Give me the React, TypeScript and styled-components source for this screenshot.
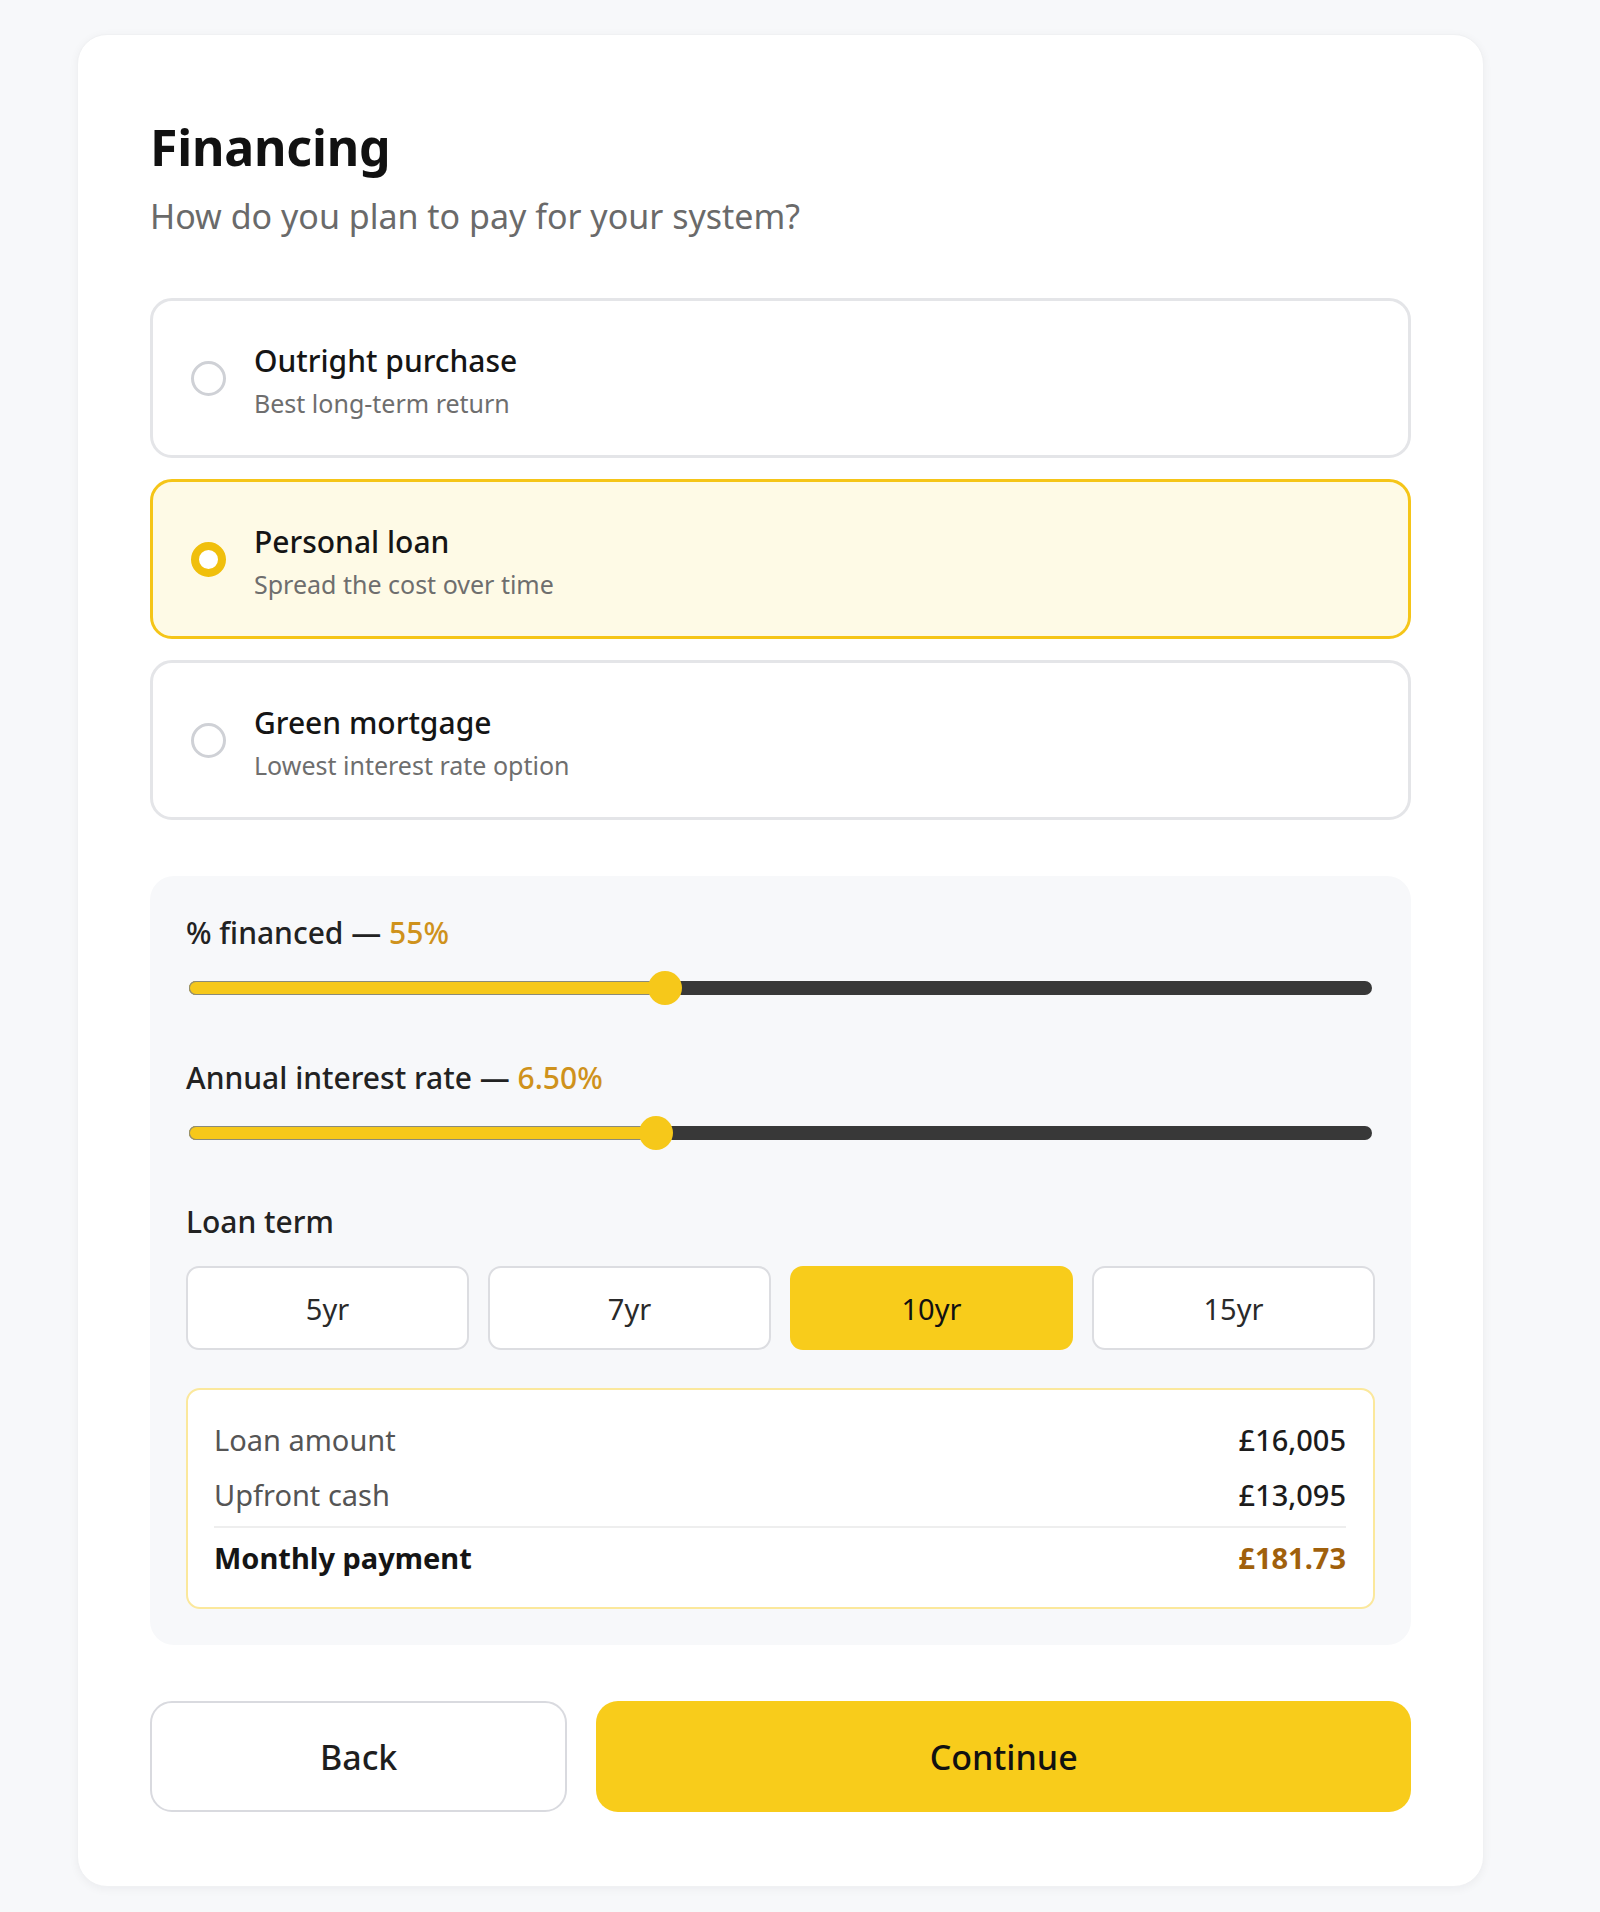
import styled, { createGlobalStyle } from 'styled-components'
import { useState } from 'react'

const GlobalStyle = createGlobalStyle`
	html, body {
		margin: 0;
		padding: 0;
		background: #f7f8fa;
		font-family: "Noto Sans", "Open Sans", "Liberation Sans", sans-serif;
		color: #1a1a1a;
	}
	* {
		box-sizing: border-box;
	}
`

const options = [
	{ id: 'outright', title: 'Outright purchase', desc: 'Best long-term return' },
	{ id: 'loan', title: 'Personal loan', desc: 'Spread the cost over time' },
	{ id: 'mortgage', title: 'Green mortgage', desc: 'Lowest interest rate option' },
]

const terms = ['5yr', '7yr', '10yr', '15yr']

export default function App(): JSX.Element {
	const [method, setMethod] = useState('loan')
	const [term, setTerm] = useState('10yr')

	// slider fill positions, read off the financed % and rate ranges
	const financedPos = 0.402
	const ratePos = 0.395

	return (
		<>
			<GlobalStyle />
			<Page>
				<Card>
					<Title>Financing</Title>
					<Subtitle>How do you plan to pay for your system?</Subtitle>

					<OptionList>
						{options.map((o) => (
							<Option key={o.id} $active={method === o.id} onClick={() => setMethod(o.id)}>
								<Radio $active={method === o.id} />
								<OptionText>
									<OptionTitle>{o.title}</OptionTitle>
									<OptionDesc>{o.desc}</OptionDesc>
								</OptionText>
							</Option>
						))}
					</OptionList>

					<Panel>
						<Label>
							% financed — <Value>55%</Value>
						</Label>
						<Slider>
							<Track />
							<Fill style={{ width: `${financedPos * 100}%` }} />
							<Thumb style={{ left: `${financedPos * 100}%` }} />
						</Slider>

						<Label $top={54}>
							Annual interest rate — <Value>6.50%</Value>
						</Label>
						<Slider>
							<Track />
							<Fill style={{ width: `${ratePos * 100}%` }} />
							<Thumb style={{ left: `${ratePos * 100}%` }} />
						</Slider>

						<Label $top={53}>Loan term</Label>
						<TermRow>
							{terms.map((t) => (
								<TermBtn key={t} $active={term === t} onClick={() => setTerm(t)}>
									{t}
								</TermBtn>
							))}
						</TermRow>

						<Summary>
							<SummaryRow>
								<SumLabel>Loan amount</SumLabel>
								<SumValue>£16,005</SumValue>
							</SummaryRow>
							<SummaryRow>
								<SumLabel>Upfront cash</SumLabel>
								<SumValue>£13,095</SumValue>
							</SummaryRow>
							<Divider />
							<SummaryRow>
								<SumLabel $strong>Monthly payment</SumLabel>
								<SumValue $accent>£181.73</SumValue>
							</SummaryRow>
						</Summary>
					</Panel>

					<Actions>
						<BackBtn type="button">Back</BackBtn>
						<ContinueBtn type="button">Continue</ContinueBtn>
					</Actions>
				</Card>
			</Page>
		</>
	)
}

const Page = styled.main`
	padding: 34px 0 24px 77px;
`
const Card = styled.section`
	width: 1407px;
	background: #ffffff;
	border-radius: 30px;
	border: 1px solid #f0f1f3;
	box-shadow: 0 2px 10px rgba(20, 24, 40, 0.05);
	padding: 81px 72px 74px;
`
const Title = styled.h1`
	margin: 0;
	font-size: 50px;
	line-height: 62px;
	font-weight: 700;
	color: #111111;
	letter-spacing: -0.2px;
`
const Subtitle = styled.p`
	margin: 16px 0 0;
	font-size: 34px;
	line-height: 44px;
	color: #6a6a6a;
`
const OptionList = styled.div`
	display: flex;
	flex-direction: column;
	gap: 21px;
	margin-top: 60px;
`
const Option = styled.div<{ $active?: boolean }>`
	display: flex;
	align-items: center;
	gap: 28px;
	height: 160px;
	padding: 0 38px;
	border-radius: 22px;
	border: 3px solid ${(p) => (p.$active ? '#f5c518' : '#e4e5e8')};
	background: ${(p) => (p.$active ? '#fefae6' : '#ffffff')};
	cursor: pointer;
`
const Radio = styled.span<{ $active?: boolean }>`
	flex: none;
	width: 35px;
	height: 35px;
	border-radius: 50%;
	border: ${(p) => (p.$active ? '8px solid #f0bf0c' : '3px solid #cfd1d6')};
	background: #ffffff;
`
const OptionText = styled.div`
	display: flex;
	flex-direction: column;
	gap: 8px;
	padding-top: 5px;
`
const OptionTitle = styled.span`
	font-size: 30px;
	line-height: 36px;
	font-weight: 500;
	color: #151515;
`
const OptionDesc = styled.span`
	font-size: 25px;
	line-height: 32px;
	color: #6e6e6e;
`
const Panel = styled.div`
	margin-top: 56px;
	background: #f7f8fa;
	border-radius: 24px;
	padding: 38px 36px 36px;
`
const Label = styled.div<{ $top?: number }>`
	margin-top: ${(p) => p.$top ?? 0}px;
	font-size: 30px;
	line-height: 38px;
	font-weight: 500;
	color: #222222;
`
const Value = styled.span`
	color: #cf921c;
`
const Slider = styled.div`
	position: relative;
	height: 34px;
	margin: 19px 3px 0;
`
const Track = styled.div`
	position: absolute;
	left: 0;
	right: 0;
	top: 10px;
	height: 14px;
	border-radius: 7px;
	background: #383838;
`
const Fill = styled.div`
	position: absolute;
	left: 0;
	top: 10px;
	height: 14px;
	border-radius: 7px 0 0 7px;
	background: #f6c81a;
	box-shadow: inset 0 0 0 1px #8a8a7a;
`
const Thumb = styled.div`
	position: absolute;
	top: 0;
	width: 34px;
	height: 34px;
	margin-left: -17px;
	border-radius: 50%;
	background: #f6c81a;
`
const TermRow = styled.div`
	display: grid;
	grid-template-columns: repeat(4, 1fr);
	gap: 19px;
	margin-top: 25px;
`
const TermBtn = styled.button<{ $active?: boolean }>`
	height: 84px;
	border-radius: 13px;
	border: 2px solid ${(p) => (p.$active ? '#f8cc1b' : '#dcdde1')};
	background: ${(p) => (p.$active ? '#f8cc1b' : '#ffffff')};
	font-family: inherit;
	font-size: 29px;
	font-weight: 400;
	color: ${(p) => (p.$active ? '#111111' : '#2a2a2a')};
	cursor: pointer;
`
const Summary = styled.div`
	margin-top: 38px;
	background: #ffffff;
	border: 2px solid #fbe89c;
	border-radius: 14px;
	padding: 22px 27px 22px 26px;
	display: flex;
	flex-direction: column;
`
const SummaryRow = styled.div`
	display: flex;
	justify-content: space-between;
	align-items: center;
	height: 55px;
	line-height: 55px;
`
const SumLabel = styled.span<{ $strong?: boolean }>`
	font-size: 29px;
	font-weight: ${(p) => (p.$strong ? 700 : 400)};
	color: ${(p) => (p.$strong ? '#151515' : '#555555')};
`
const SumValue = styled.span<{ $accent?: boolean }>`
	font-size: 29px;
	font-weight: ${(p) => (p.$accent ? 700 : 500)};
	color: ${(p) => (p.$accent ? '#a0600c' : '#1c1c1c')};
`
const Divider = styled.div`
	height: 2px;
	background: #eeeeee;
	margin: 4px 0 2px;
`
const Actions = styled.div`
	display: flex;
	gap: 29px;
	margin-top: 56px;
`
const BackBtn = styled.button`
	flex: 1;
	height: 111px;
	border-radius: 22px;
	border: 2px solid #d9dadf;
	background: #ffffff;
	font-family: inherit;
	font-size: 34px;
	font-weight: 500;
	color: #1e1e1e;
	cursor: pointer;
`
const ContinueBtn = styled.button`
	flex: 2;
	height: 111px;
	border-radius: 22px;
	border: none;
	background: #f8cc1b;
	font-family: inherit;
	font-size: 34px;
	font-weight: 500;
	color: #111111;
	cursor: pointer;
`
